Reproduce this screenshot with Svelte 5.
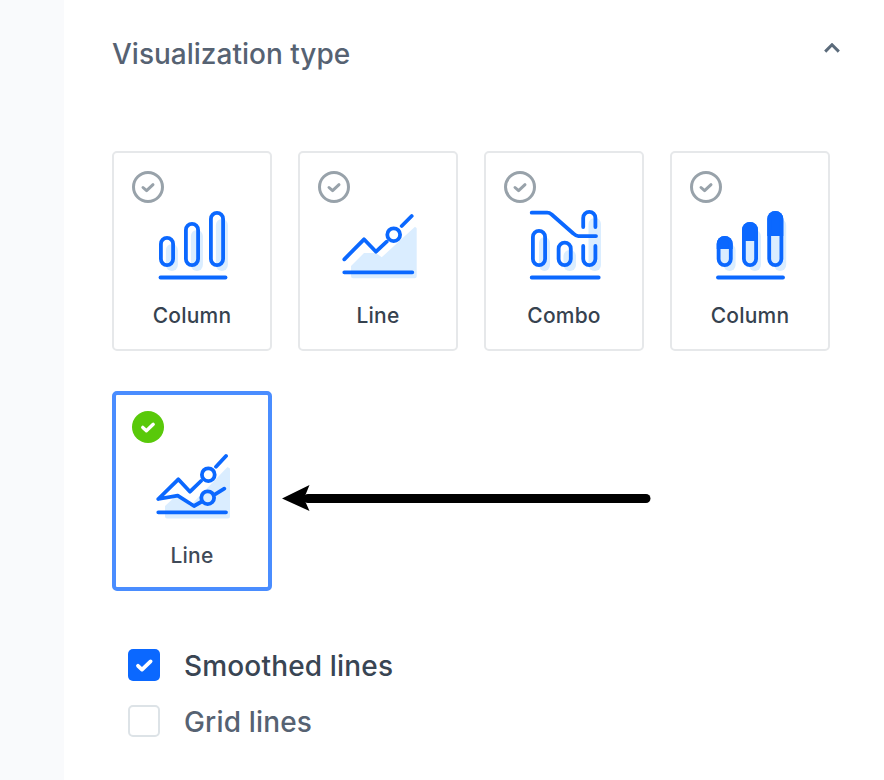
<script>
  const cards = [
    { label: 'Column', icon: 'column' },
    { label: 'Line', icon: 'line' },
    { label: 'Combo', icon: 'combo' },
    { label: 'Column', icon: 'stacked' },
    { label: 'Line', icon: 'multiline', selected: true }
  ];

  const columnBars = [
    { x: 8.9, y: 32.9, h: 27.2 },
    { x: 33.9, y: 18.9, h: 41.2 },
    { x: 58.9, y: 7.9, h: 52.2 }
  ];

  const stackedBars = [
    { x: 8.6, y: 32.9, h: 27.2, fill: 11 },
    { x: 33.9, y: 18.9, h: 41.2, fill: 17 },
    { x: 59.2, y: 7.9, h: 52.2, fill: 23 }
  ];

  const comboShadows = [
    { x: 15, y: 32, w: 11, h: 34 },
    { x: 39.5, y: 45, w: 12.5, h: 21 },
    { x: 64.5, y: 13, w: 12.5, h: 53 }
  ];
</script>

<div class="page">
  <div class="rail"></div>
  <main class="panel">
    <header class="panel-header">
      <h2>Visualization type</h2>
      <svg class="chevron" width="16" height="10" viewBox="0 0 16 10" aria-hidden="true">
        <path d="M1.2 8.600 8 1.800l6.800 6.800" />
      </svg>
    </header>

    <div class="types">
      {#each cards as card}
        <button class="card" class:selected={card.selected}>
          <span class="tick">
            <svg width="32" height="32" viewBox="0 0 32 32" aria-hidden="true">
              {#if card.selected}
                <circle cx="16" cy="16" r="16" fill="#59c90a" />
                <path d="M10.800 16.400l3.600 3.300 6.800-6.400" fill="none" stroke="#fff" stroke-width="3.400" stroke-linecap="round" stroke-linejoin="round" />
              {:else}
                <circle cx="16" cy="16" r="14.500" fill="none" stroke="#98a2aa" stroke-width="3" />
                <path d="M11 16.500l3.600 3.200 6.400-6" fill="none" stroke="#98a2aa" stroke-width="3" stroke-linecap="round" stroke-linejoin="round" />
              {/if}
            </svg>
          </span>

          <svg class="chart" width="80" height="80" viewBox="0 0 80 80" aria-hidden="true">
            {#if card.icon === 'column'}
              {#each columnBars as b}
                <rect class="soft" x={b.x + 5} y={b.y + 6} width="12" height={b.h} rx="6" />
                <rect class="outline" x={b.x} y={b.y} width="12.200" height={b.h} rx="6.100" />
              {/each}
              <path class="stroke" d="M8.500 72.500h65" />
            {:else if card.icon === 'line'}
              <path class="soft" d="M13 61l13-13h12l5.700 4.300L77 21.700l1.700 1.600v48a2 2 0 0 1-2 2H15a2 2 0 0 1-2-2z" />
              <path class="stroke" d="M6.300 54.300 26 34.300l12 12.400 10.700-10M63.700 21l10-10M6.300 67.300h68" />
              <circle class="outline" cx="55.700" cy="29.700" r="6.400" />
            {:else if card.icon === 'combo'}
              {#each comboShadows as s}
                <rect class="soft" x={s.x} y={s.y} width={s.w} height={s.h} rx="6" />
              {/each}
              <rect class="outline" x="8.900" y="25.900" width="12.200" height="34.200" rx="6.100" />
              <rect class="outline" x="34.600" y="37.600" width="12.200" height="22.500" rx="6.100" />
              <path class="stroke" d="M59.200 22v-9a6.100 6.100 0 0 1 12.200 0v9M59.200 41v13a6.100 6.100 0 0 0 12.200 0V41" />
              <path class="stroke" d="M7.700 7.700h15.500c2 0 3 .6 4.500 1.800l21.600 19c1.600 1.400 2.900 2.600 5 2.600H72M7.700 72.500h67" />
            {:else if card.icon === 'stacked'}
              {#each stackedBars as b}
                <rect class="soft" x={b.x + 5} y={b.y + 6} width="12" height={b.h} rx="6" />
                <rect class="soft" x={b.x} y={b.y} width="12.200" height={b.h} rx="6.100" />
                <path class="solid" d="M{b.x - 1.900} {b.y + b.fill}v-{b.fill - 6}a8 8 0 0 1 16 0v{b.fill - 6}z" />
                <rect class="outline" x={b.x} y={b.y} width="12.200" height={b.h} rx="6.100" />
              {/each}
              <path class="stroke" d="M8 72.500h65" />
            {:else}
              <path class="soft" d="M13 61l13-12 12 12L75.500 22l2.500 1.500v48a2 2 0 0 1-2 2H15a2 2 0 0 1-2-2z" />
              <path class="stroke" d="M6.300 54 26.300 34.300 38 46.700l11-10.700M64 21.700l10-10.700M6.300 54l19.400-3.300L42 61l7-4M63 49.300l9.300-5.600M6.300 67.300H74" />
              <circle class="outline" cx="56.300" cy="29.700" r="6.400" />
              <circle class="outline" cx="55.700" cy="52.700" r="6.400" />
            {/if}
          </svg>

          <span class="label">{card.label}</span>
        </button>
      {/each}

      <svg class="arrow" width="372" height="30" viewBox="0 0 372 30" aria-hidden="true">
        <path d="M26 15.500h338" stroke="#000" stroke-width="9" stroke-linecap="round" />
        <path d="M0 15.500 27.500 2l-5.500 13.500L27.500 28z" fill="#000" />
      </svg>
    </div>

    <div class="options">
      <label class="option checked">
        <span class="box">
          <svg width="20" height="20" viewBox="0 0 20 20" aria-hidden="true">
            <path d="M4 10.800l4 3.800 8.600-8.200" fill="none" stroke="#fff" stroke-width="3.800" stroke-linecap="round" stroke-linejoin="round" />
          </svg>
        </span>
        <span class="option-text">Smoothed lines</span>
      </label>
      <label class="option">
        <span class="box"></span>
        <span class="option-text">Grid lines</span>
      </label>
    </div>
  </main>
</div>

<style>
  :global(body) {
    background: #fff;
  }

  .page {
    display: flex;
    width: 884px;
    height: 780px;
    overflow: hidden;
    font-family: Inter, "Liberation Sans", sans-serif;
  }

  .rail {
    width: 64px;
    flex-shrink: 0;
    background: #f9fafc;
  }

  .panel {
    flex: 1;
    padding: 0 44px 0 48px;
  }

  .panel-header {
    display: flex;
    align-items: center;
    justify-content: space-between;
    height: 108px;
    margin-bottom: 43px;
  }

  h2 {
    margin: 0;
    font-size: 28px;
    font-weight: 500;
    color: #566272;
  }

  .chevron {
    margin-bottom: 12px;
  }

  .chevron path {
    fill: none;
    stroke: #5b6b7b;
    stroke-width: 3;
  }

  .types {
    position: relative;
    display: grid;
    grid-template-columns: repeat(4, 160px);
    column-gap: 26px;
    row-gap: 40px;
  }

  .card {
    position: relative;
    display: flex;
    flex-direction: column;
    align-items: center;
    box-sizing: border-box;
    width: 160px;
    height: 200px;
    padding: 52px 0 0;
    background: #fff;
    border: 2px solid #e6e8ea;
    border-radius: 5px;
    font: inherit;
  }

  .card.selected {
    padding-top: 50px;
    border: 4px solid #4a8dff;
  }

  .tick {
    position: absolute;
    top: 18px;
    left: 18px;
    width: 32px;
    height: 32px;
  }

  .card.selected .tick {
    top: 16px;
    left: 16px;
  }

  .tick svg,
  .chart,
  .box svg {
    display: block;
  }

  .soft {
    fill: #daedff;
  }

  .solid {
    fill: #0b68ff;
  }

  .outline {
    fill: none;
    stroke: #0b68ff;
    stroke-width: 3.800;
  }

  .stroke {
    fill: none;
    stroke: #0b68ff;
    stroke-width: 3.800;
    stroke-linecap: round;
    stroke-linejoin: round;
  }

  .label {
    margin-top: 19px;
    font-size: 21px;
    letter-spacing: 0.2px;
    line-height: 24px;
    font-weight: 500;
    color: #36424f;
  }

  .selected .label {
    color: #3f4a58;
  }

  .arrow {
    position: absolute;
    left: 170px;
    top: 332px;
  }

  .options {
    display: flex;
    flex-direction: column;
    gap: 24px;
    margin-top: 58px;
    padding-left: 16px;
  }

  .option {
    display: flex;
    align-items: center;
    gap: 24px;
    height: 32px;
    font-size: 28px;
    letter-spacing: 0.16px;
    font-weight: 500;
    color: #566272;
  }

  .option-text {
    position: relative;
    top: 1px;
  }

  .option.checked {
    color: #394553;
  }

  .box {
    display: flex;
    align-items: center;
    justify-content: center;
    box-sizing: border-box;
    width: 32px;
    height: 32px;
    border: 2px solid #dde3e7;
    border-radius: 5px;
    background: #fff;
  }

  .checked .box {
    border: none;
    background: #0b68ff;
  }
</style>
